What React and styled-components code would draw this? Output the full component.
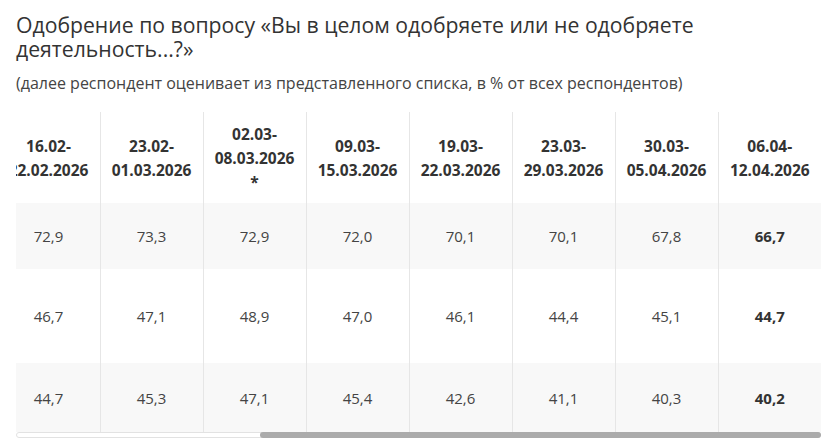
import React, { useLayoutEffect, useRef } from "react";
import styled, { createGlobalStyle } from "styled-components";

const Global = createGlobalStyle`
  html, body { margin: 0; padding: 0; background: #fff; }
  body { font-family: "Open Sans", "Noto Sans", sans-serif; color: #333; }
`;

const Page = styled.div`
  padding: 13px 14px 0 16px;
`;

const Title = styled.h2`
  margin: 0;
  font-size: 21.2px;
  line-height: 24px;
  font-weight: 400;
  color: #333;
`;

const Subtitle = styled.p`
  margin: 12px 0 0;
  font-size: 16px;
  line-height: 21px;
  color: #444;
`;

const Scroller = styled.div`
  margin-top: 18px;
  width: 805px;
  overflow: hidden;
`;

const Track = styled.div`
  box-sizing: border-box;
  width: 805px;
  height: 6px;
  border: 1px solid #e2e2e2;
  border-radius: 3px;
  background: #fff;
  display: flex;
  justify-content: flex-end;
`;

const Thumb = styled.div`
  flex: 0 0 auto;
  margin: -1px;
  height: 6px;
  border-radius: 3px;
  background: #ababab;
`;

const Table = styled.table`
  border-collapse: collapse;
  table-layout: fixed;
  width: ${(p) => p.$w}px;
`;

const Col = styled.col`
  width: ${(p) => p.$w}px;
`;

const Row = styled.tr`
  height: ${(p) => p.$h}px;
  background: ${(p) => (p.$shade ? "#f8f8f8" : "#fff")};
`;

const HeadCell = styled.th`
  padding: 0 6px;
  font-size: 15.5px;
  line-height: 24px;
  font-weight: 700;
  color: #333;
  text-align: center;
  vertical-align: middle;
  & + & { border-left: 1px solid #e6e6e6; }
`;

const Cell = styled.td`
  padding: 0 6px;
  font-size: 15px;
  line-height: 22px;
  font-weight: ${(p) => (p.$bold ? 700 : 400)};
  color: ${(p) => (p.$bold ? "#333" : "#444")};
  text-align: center;
  vertical-align: middle;
  & + & { border-left: 1px solid #e6e6e6; }
`;

const LabelCell = styled(Cell)`
  text-align: left;
`;

const periods = [
  ["16.02-", "22.02.2026"],
  ["23.02-", "01.03.2026"],
  ["02.03-", "08.03.2026", "*"],
  ["09.03-", "15.03.2026"],
  ["19.03-", "22.03.2026"],
  ["23.03-", "29.03.2026"],
  ["30.03-", "05.04.2026"],
  ["06.04-", "12.04.2026"],
];

const rows = [
  { label: "Президента России", h: 66, shade: true, v: ["72,9", "73,3", "72,9", "72,0", "70,1", "70,1", "67,8", "66,7"] },
  { label: "Председателя Правительства", h: 94, shade: false, v: ["46,7", "47,1", "48,9", "47,0", "46,1", "44,4", "45,1", "44,7"] },
  { label: "Правительства России", h: 69, shade: true, v: ["44,7", "45,3", "47,1", "45,4", "42,6", "41,1", "40,3", "40,2"] },
];

const LABEL_W = 331;
const COL_W = 103;
const VIEW_W = 805;
const TOTAL_W = LABEL_W + COL_W * periods.length;

export default function App() {
  const ref = useRef(null);
  useLayoutEffect(() => {
    const el = ref.current;
    if (el) el.scrollLeft = el.scrollWidth;
  }, []);
  return (
    <Page>
      <Global />
      <Title>Одобрение по вопросу «Вы в целом одобряете или не одобряете деятельность...?»</Title>
      <Subtitle>(далее респондент оценивает из представленного списка, в % от всех респондентов)</Subtitle>
      <Scroller ref={ref}>
        <Table $w={TOTAL_W}>
          <colgroup>
            <Col $w={LABEL_W} />
            {periods.map((_, i) => (
              <Col key={i} $w={COL_W} />
            ))}
          </colgroup>
          <thead>
            <Row $h={91}>
              <HeadCell />
              {periods.map((p, i) => (
                <HeadCell key={i}>
                  {p.map((line, j) => (
                    <React.Fragment key={j}>
                      {j > 0 && <br />}
                      {line}
                    </React.Fragment>
                  ))}
                </HeadCell>
              ))}
            </Row>
          </thead>
          <tbody>
            {rows.map((r, i) => (
              <Row key={i} $h={r.h} $shade={r.shade}>
                <LabelCell>{r.label}</LabelCell>
                {r.v.map((x, j) => (
                  <Cell key={j} $bold={j === r.v.length - 1}>
                    {x}
                  </Cell>
                ))}
              </Row>
            ))}
          </tbody>
        </Table>
      </Scroller>
      <Track>
        <Thumb style={{ width: Math.round((VIEW_W * VIEW_W) / TOTAL_W) }} />
      </Track>
    </Page>
  );
}
